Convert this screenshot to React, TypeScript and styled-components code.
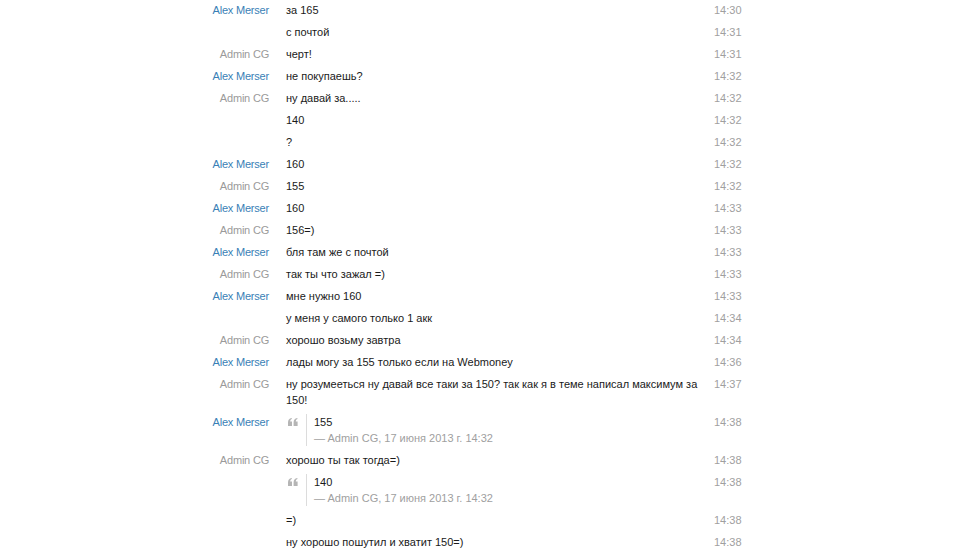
import React from "react";
import styled, { createGlobalStyle } from "styled-components";

const Global = createGlobalStyle`
  html, body { margin: 0; padding: 0; background: #fff; }
  body { font-family: "Liberation Sans", Arial, sans-serif; font-size: 11px; color: #1a1a1a; }
`;

const Log = styled.div`
  margin-top: -1px;
  padding-left: 190px;
  display: flex;
  flex-direction: column;
`;

const Row = styled.div`
  display: grid;
  grid-template-columns: 96px 420px 48px;
  padding: 3px 0;
  line-height: 16px;
`;

const Name = styled.div<{ $admin?: boolean }>`
  text-align: right;
  padding-right: 17px;
  white-space: nowrap;
  letter-spacing: -0.2px;
  color: ${(p) => (p.$admin ? "#9a9a9a" : "#3a7fb6")};
`;

const Text = styled.div`
  color: #1a1a1a;
`;

const Time = styled.div`
  padding-left: 8px;
  color: #a0a0a0;
  white-space: nowrap;
`;

const Quote = styled.div`
  display: flex;
  align-items: flex-start;
`;

const QuoteIcon = styled.svg`
  flex: none;
  margin: 4px 0 0 2px;
  width: 10px;
  height: 8px;
`;

const QuoteBody = styled.div`
  margin-left: 8px;
  border-left: 1px solid #dcdcdc;
  padding-left: 7px;
`;

const Cite = styled.div`
  color: #a0a0a0;
`;

type Msg = {
  name?: string;
  admin?: boolean;
  text?: string;
  quote?: string;
  time: string;
};

const msgs: Msg[] = [
  { name: "Alex Merser", text: "за 165", time: "14:30" },
  { text: "с почтой", time: "14:31" },
  { name: "Admin CG", admin: true, text: "черт!", time: "14:31" },
  { name: "Alex Merser", text: "не покупаешь?", time: "14:32" },
  { name: "Admin CG", admin: true, text: "ну давай за.....", time: "14:32" },
  { text: "140", time: "14:32" },
  { text: "?", time: "14:32" },
  { name: "Alex Merser", text: "160", time: "14:32" },
  { name: "Admin CG", admin: true, text: "155", time: "14:32" },
  { name: "Alex Merser", text: "160", time: "14:33" },
  { name: "Admin CG", admin: true, text: "156=)", time: "14:33" },
  { name: "Alex Merser", text: "бля там же с почтой", time: "14:33" },
  { name: "Admin CG", admin: true, text: "так ты что зажал =)", time: "14:33" },
  { name: "Alex Merser", text: "мне нужно 160", time: "14:33" },
  { text: "у меня у самого только 1 акк", time: "14:34" },
  { name: "Admin CG", admin: true, text: "хорошо возьму завтра", time: "14:34" },
  { name: "Alex Merser", text: "лады могу за 155 только если на Webmoney", time: "14:36" },
  {
    name: "Admin CG",
    admin: true,
    text: "ну розумееться ну давай все таки за 150? так как я в теме написал максимум за 150!",
    time: "14:37",
  },
  { name: "Alex Merser", quote: "155", time: "14:38" },
  { name: "Admin CG", admin: true, text: "хорошо ты так тогда=)", time: "14:38" },
  { quote: "140", time: "14:38" },
  { text: "=)", time: "14:38" },
  { text: "ну хорошо пошутил и хватит 150=)", time: "14:38" },
];

const QuoteMark = () => (
  <QuoteIcon viewBox="0 0 10 8">
    <path
      d="M0 8V4.6C0 2 1.2 0.6 3.6 0L4 1.1C2.9 1.5 2.3 2.2 2.2 3.4H4V8Z M5.6 8V4.6C5.6 2 6.8 0.6 9.2 0L9.6 1.1C8.5 1.5 7.9 2.2 7.8 3.4H9.6V8Z"
      fill="#b5b5b5"
    />
  </QuoteIcon>
);

export default function App() {
  return (
    <>
      <Global />
      <Log>
        {msgs.map((m, i) => (
          <Row key={i}>
            <Name $admin={m.admin}>{m.name ?? ""}</Name>
            {m.quote ? (
              <Quote>
                <QuoteMark />
                <QuoteBody>
                  <div>{m.quote}</div>
                  <Cite>— Admin CG, 17 июня 2013 г. 14:32</Cite>
                </QuoteBody>
              </Quote>
            ) : (
              <Text>{m.text}</Text>
            )}
            <Time>{m.time}</Time>
          </Row>
        ))}
      </Log>
    </>
  );
}
